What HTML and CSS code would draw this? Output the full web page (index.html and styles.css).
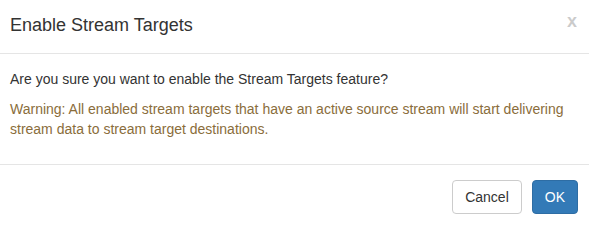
FILE: index.html
```html
<!DOCTYPE html>
<html lang="en">
<head>
<meta charset="utf-8">
<title>Enable Stream Targets</title>
<link rel="stylesheet" href="styles.css">
</head>
<body>
<div class="modal">
  <div class="modal-header">
    <h4 class="modal-title">Enable Stream Targets</h4>
    <button class="close" type="button" aria-label="Close">x</button>
  </div>
  <div class="modal-body">
    <p>Are you sure you want to enable the Stream Targets feature?</p>
    <p class="text-warning">Warning: All enabled stream targets that have an active source stream will start delivering stream data to stream target destinations.</p>
  </div>
  <div class="modal-footer">
    <button class="btn btn-default" type="button">Cancel</button>
    <button class="btn btn-primary" type="button">OK</button>
  </div>
</div>
</body>
</html>
```
FILE: styles.css
```css
html, body {
  margin: 0;
  padding: 0;
  background: #fff;
}
body {
  font-family: "Liberation Sans", Arial, Helvetica, sans-serif;
  font-size: 14px;
  line-height: 20px;
  color: #333;
}
.modal {
  background: #fff;
}
.modal-header {
  display: flex;
  justify-content: space-between;
  align-items: flex-start;
  padding: 13px 12px 16px 10px;
  border-bottom: 1px solid #e5e5e5;
}
.modal-title {
  margin: 0;
  font-size: 18px;
  font-weight: normal;
  line-height: 24px;
  color: #333;
}
.close {
  margin: -1px 0 0 0;
  padding: 0;
  border: 0;
  background: transparent;
  font-family: "Liberation Sans", Arial, sans-serif;
  font-size: 18px;
  font-weight: bold;
  line-height: 18px;
  color: #000;
  opacity: 0.2;
  cursor: pointer;
}
.modal-body {
  padding: 15px 10px;
}
.modal-body p {
  margin: 0 0 10px;
}
.text-warning {
  color: #8a6d3b;
}
.modal-footer {
  display: flex;
  justify-content: flex-end;
  gap: 10px;
  padding: 15px 11px 15px 10px;
  border-top: 1px solid #e5e5e5;
}
.btn {
  font-family: "Liberation Sans", Arial, sans-serif;
  font-size: 14px;
  line-height: 20px;
  padding: 6px 12px;
  border: 1px solid transparent;
  border-radius: 4px;
  cursor: pointer;
}
.btn-default {
  background: #fff;
  border-color: #ccc;
  color: #333;
}
.btn-primary {
  background: #337ab7;
  border-color: #2e6da4;
  color: #fff;
}
```
